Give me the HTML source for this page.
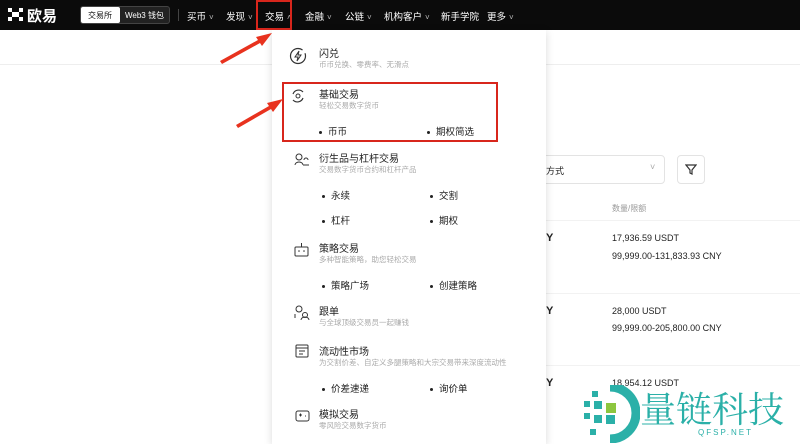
<!DOCTYPE html>
<html><head><meta charset="utf-8"><style>
*{margin:0;padding:0;box-sizing:border-box}
body{width:800px;height:444px;overflow:hidden;background:#fff;font-family:"Liberation Sans","Noto Sans CJK SC",sans-serif;position:relative;color:#222}
.hdr{position:absolute;left:0;top:0;width:800px;height:30px;background:#0b0b0b;color:#fff;font-size:9.5px}
.hdr span{position:absolute;top:9px;white-space:nowrap}
.hdr i{font-style:normal;font-size:8px;color:#bbb;margin-left:3px}
.ab{position:absolute}
.panel{position:absolute;left:272px;top:30px;width:274px;height:414px;background:#fff;box-shadow:0 2px 8px rgba(0,0,0,.15)}
.t{position:absolute;font-size:10px;color:#222;white-space:nowrap}
.s{position:absolute;font-size:7.5px;color:#aaa;white-space:nowrap}
.b{position:absolute;font-size:9.5px;color:#222;white-space:nowrap}
.b:before{content:"";display:inline-block;width:3px;height:3px;background:#222;border-radius:50%;margin-right:6px;vertical-align:middle}
.r{position:absolute;font-size:9px;color:#222;white-space:nowrap}
</style></head><body>
<div class="ab" style="left:0;top:30px;width:800px;height:35px;background:#fff;border-bottom:1px solid #eee"></div>
<div class="hdr">
 <svg class="ab" style="left:8px;top:8px" width="16" height="14"><g fill="#fff"><rect x="0" y="0" width="4" height="4"/><rect x="11" y="0" width="4" height="4"/><rect x="4" y="4" width="7" height="5"/><rect x="0" y="9" width="4" height="4"/><rect x="11" y="9" width="4" height="4"/></g></svg>
 <span style="left:27px;top:5px;font-size:15px;font-weight:bold">欧易</span>
 <div class="ab" style="left:80px;top:6px;width:90px;height:18px;border:1px solid #444;border-radius:3px;background:#222"></div>
 <div class="ab" style="left:81px;top:7px;width:39px;height:16px;background:#fff;border-radius:2px"></div>
 <span style="left:88px;top:10px;font-size:8px;color:#111">交易所</span>
 <span style="left:125px;top:10px;font-size:8px">Web3 钱包</span>
 <div class="ab" style="left:178px;top:9px;width:1px;height:12px;background:#444"></div>
 <span style="left:187px">买币<i>˅</i></span>
 <span style="left:226px">发现<i>˅</i></span>
 <span style="left:265px">交易<i>˄</i></span>
 <span style="left:305px">金融<i>˅</i></span>
 <span style="left:345px">公链<i>˅</i></span>
 <span style="left:384px">机构客户<i>˅</i></span>
 <span style="left:441px">新手学院</span>
 <span style="left:487px">更多<i>˅</i></span>
 <div class="ab" style="left:256px;top:0;width:36px;height:30px;border:2px solid #d8261c"></div>
</div>
<div class="ab" style="left:540px;top:155px;width:125px;height:29px;border:1px solid #e3e3e3;border-radius:4px"></div>
<div class="r" style="left:546px;top:164px">方式</div>
<div class="r" style="left:650px;top:162px;color:#aaa">˅</div>
<div class="ab" style="left:677px;top:155px;width:28px;height:29px;border:1px solid #e3e3e3;border-radius:4px"></div>
<svg class="ab" style="left:685px;top:164px" width="12" height="11"><path d="M1 1h10L7 6v4L5 9V6z" fill="none" stroke="#333" stroke-width="1.2"/></svg>
<div class="ab" style="left:540px;top:220px;width:260px;height:1px;background:#f2f2f2"></div>
<div class="s" style="left:612px;top:203px;font-size:8px;color:#999">数量/限额</div>
<div class="r" style="left:546px;top:232px;font-weight:bold;font-size:11px">Y</div>
<div class="r" style="left:612px;top:233px">17,936.59 USDT</div>
<div class="r" style="left:612px;top:251px">99,999.00-131,833.93 CNY</div>
<div class="ab" style="left:540px;top:293px;width:260px;height:1px;background:#f2f2f2"></div>
<div class="r" style="left:546px;top:305px;font-weight:bold;font-size:11px">Y</div>
<div class="r" style="left:612px;top:306px">28,000 USDT</div>
<div class="r" style="left:612px;top:323px">99,999.00-205,800.00 CNY</div>
<div class="ab" style="left:540px;top:365px;width:260px;height:1px;background:#f2f2f2"></div>
<div class="r" style="left:546px;top:377px;font-weight:bold;font-size:11px">Y</div>
<div class="r" style="left:612px;top:378px">18,954.12 USDT</div>
<svg class="ab" style="left:580px;top:385px" width="60" height="58"><g fill="#2bb0a8"><rect x="12" y="6" width="6" height="6"/><rect x="4" y="16" width="6" height="6"/><rect x="14" y="16" width="8" height="8"/><rect x="4" y="28" width="6" height="6"/><rect x="14" y="30" width="8" height="8"/><rect x="10" y="44" width="6" height="6"/></g><rect x="26" y="18" width="10" height="10" fill="#8dc63f"/><rect x="26" y="30" width="9" height="9" fill="#2bb0a8"/><path d="M30 2a26 26 0 0 1 0 52" fill="none" stroke="#2bb0a8" stroke-width="9"/></svg>
<div class="ab" style="left:640px;top:388px;font-size:36px;color:#2bb0a8;font-family:'Noto Serif CJK SC',serif;white-space:nowrap;line-height:40px">量链科技</div>
<div class="ab" style="left:698px;top:428px;font-size:8px;color:#2bb0a8;letter-spacing:2px">QFSP.NET</div>
<div class="panel">
 <svg class="ab" style="left:17px;top:17px" width="18" height="18"><circle cx="9" cy="9" r="7.5" fill="none" stroke="#333" stroke-width="1.2" stroke-dasharray="40 4"/><path d="M10 4L6 10h3l-1 4 4-6H9z" fill="none" stroke="#333" stroke-width="1"/></svg>
 <div class="t" style="left:47px;top:15px">闪兑</div>
 <div class="s" style="left:47px;top:29px">币币兑换、零费率、无滑点</div>
 <svg class="ab" style="left:18px;top:58px" width="16" height="16"><path d="M3 6a6 6 0 0 1 10-2M13 10a6 6 0 0 1-10 2" fill="none" stroke="#333" stroke-width="1.2"/><circle cx="8" cy="8" r="2" fill="none" stroke="#333"/></svg>
 <div class="t" style="left:47px;top:56px">基础交易</div>
 <div class="s" style="left:47px;top:70px">轻松交易数字货币</div>
 <div class="b" style="left:47px;top:94px">币币</div>
 <div class="b" style="left:155px;top:94px">期权简选</div>
 <svg class="ab" style="left:22px;top:123px" width="16" height="14"><circle cx="5" cy="4" r="3" fill="none" stroke="#333"/><path d="M1 12a4 3 0 0 1 8 0M10 7a2 2 0 1 1 4 0M9 12h6" fill="none" stroke="#333"/></svg>
 <div class="t" style="left:47px;top:120px">衍生品与杠杆交易</div>
 <div class="s" style="left:47px;top:134px">交易数字货币合约和杠杆产品</div>
 <div class="b" style="left:50px;top:158px">永续</div>
 <div class="b" style="left:158px;top:158px">交割</div>
 <div class="b" style="left:50px;top:183px">杠杆</div>
 <div class="b" style="left:158px;top:183px">期权</div>
 <svg class="ab" style="left:22px;top:212px" width="15" height="16"><rect x="1" y="5" width="13" height="9" rx="1" fill="none" stroke="#333"/><path d="M7.5 5V1" stroke="#333"/><circle cx="5" cy="9" r=".8" fill="#333"/><circle cx="10" cy="9" r=".8" fill="#333"/></svg>
 <div class="t" style="left:47px;top:210px">策略交易</div>
 <div class="s" style="left:47px;top:224px">多种智能策略，助您轻松交易</div>
 <div class="b" style="left:50px;top:248px">策略广场</div>
 <div class="b" style="left:158px;top:248px">创建策略</div>
 <svg class="ab" style="left:22px;top:275px" width="16" height="16"><circle cx="5" cy="4" r="3" fill="none" stroke="#333"/><circle cx="11" cy="10" r="2.5" fill="none" stroke="#333"/><path d="M7 15a4 3 0 0 1 8 0M1 9v4" fill="none" stroke="#333"/></svg>
 <div class="t" style="left:47px;top:273px">跟单</div>
 <div class="s" style="left:47px;top:287px">与全球顶级交易员一起赚钱</div>
 <svg class="ab" style="left:23px;top:314px" width="14" height="14"><rect x="1" y="1" width="12" height="12" rx="1" fill="none" stroke="#333"/><path d="M1 4h12M4 7h6M4 10h4" stroke="#333"/></svg>
 <div class="t" style="left:47px;top:313px">流动性市场</div>
 <div class="s" style="left:47px;top:327px">为交割价差、自定义多腿策略和大宗交易带来深度流动性</div>
 <div class="b" style="left:50px;top:351px">价差速递</div>
 <div class="b" style="left:158px;top:351px">询价单</div>
 <svg class="ab" style="left:23px;top:380px" width="15" height="12"><rect x="1" y="1" width="13" height="10" rx="2" fill="none" stroke="#333"/><path d="M4 5h3M5.5 3.5v3M10 6h1" stroke="#333"/></svg>
 <div class="t" style="left:47px;top:376px">模拟交易</div>
 <div class="s" style="left:47px;top:390px">零风险交易数字货币</div>
</div>
<div class="ab" style="left:282px;top:82px;width:216px;height:60px;border:2px solid #d8261c"></div>
<svg class="ab" style="left:0;top:0" width="800" height="444"><g fill="#e8321e"><path d="M220 61L258 40L256 37L272 33L262 46L260 43L222 64z"/><path d="M236 125L269 106L267 103L283 99L273 112L271 109L238 128z"/></g></svg>
</body></html>
